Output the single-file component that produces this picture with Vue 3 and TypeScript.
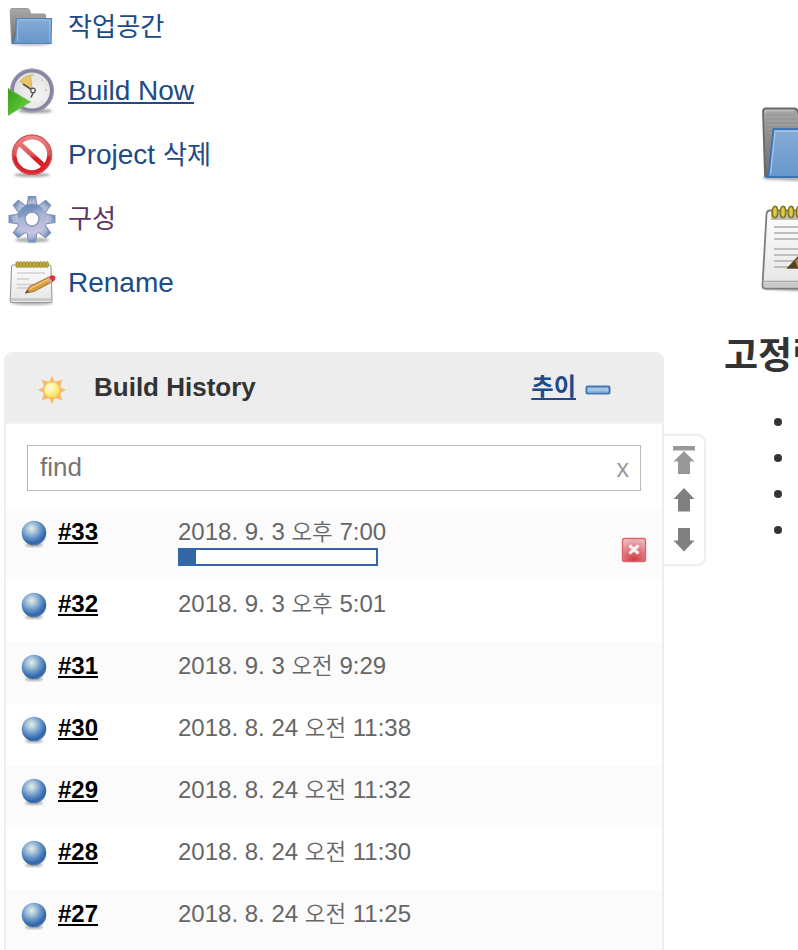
<script setup lang="ts">
import { defineComponent, h } from 'vue'

interface Task {
  label: string
  icon: 'folder' | 'clock' | 'delete' | 'gear' | 'notepad'
  state?: 'hovered' | 'visited'
}

interface Build {
  id: number
  date: string
  progress?: number
}

const tasks: Task[] = [
  { label: '작업공간', icon: 'folder' },
  { label: 'Build Now', icon: 'clock', state: 'hovered' },
  { label: 'Project 삭제', icon: 'delete' },
  { label: '구성', icon: 'gear', state: 'visited' },
  { label: 'Rename', icon: 'notepad' },
]

const builds: Build[] = [
  { id: 33, date: '2018. 9. 3 오후 7:00', progress: 8.2 },
  { id: 32, date: '2018. 9. 3 오후 5:01' },
  { id: 31, date: '2018. 9. 3 오전 9:29' },
  { id: 30, date: '2018. 8. 24 오전 11:38' },
  { id: 29, date: '2018. 8. 24 오전 11:32' },
  { id: 28, date: '2018. 8. 24 오전 11:30' },
  { id: 27, date: '2018. 8. 24 오전 11:25' },
]

// Sets Hangul runs slightly smaller than the Latin text around them.
const MixedText = defineComponent({
  props: { text: { type: String, required: true } },
  setup(props) {
    return () =>
      h(
        'span',
        props.text
          .split(/([\uac00-\ud7a3]+)/)
          .filter((part) => part.length > 0)
          .map((part) => (/[\uac00-\ud7a3]/.test(part) ? h('span', { class: 'hangul' }, part) : part)),
      )
  },
})

const teeth = [0, 45, 90, 135, 180, 225, 270, 315]
const rings = [0, 1, 2, 3, 4, 5, 6, 7, 8, 9]
</script>

<template>
  <div class="page">
    <svg class="defs" aria-hidden="true">
      <defs>
        <linearGradient id="g-back" x1="0" y1="0" x2="0" y2="1">
          <stop offset="0" stop-color="#a9a9a9" /><stop offset="1" stop-color="#6c6c6c" />
        </linearGradient>
        <linearGradient id="g-front" x1="0" y1="0" x2="0" y2="1">
          <stop offset="0" stop-color="#85abd6" /><stop offset="1" stop-color="#6797cc" />
        </linearGradient>
        <linearGradient id="g-paper" x1="0" y1="0" x2="0" y2="1">
          <stop offset="0" stop-color="#fdfdfd" /><stop offset="1" stop-color="#e6e6e6" />
        </linearGradient>
        <linearGradient id="g-red" x1="0" y1="0" x2="0" y2="1">
          <stop offset="0" stop-color="#ee8c8c" /><stop offset=".5" stop-color="#df5555" />
          <stop offset=".58" stop-color="#d51f28" /><stop offset="1" stop-color="#dc2830" />
        </linearGradient>
        <linearGradient id="g-gear" x1="0" y1="0" x2="0.2" y2="1">
          <stop offset="0" stop-color="#6083b4" /><stop offset=".5" stop-color="#a4b5d4" />
          <stop offset="1" stop-color="#c9c4e2" />
        </linearGradient>
        <linearGradient id="g-play" x1="0" y1="0" x2="1" y2="1">
          <stop offset="0" stop-color="#369b18" /><stop offset=".55" stop-color="#55bd30" />
          <stop offset="1" stop-color="#80cf62" />
        </linearGradient>
        <radialGradient id="g-face" cx=".6" cy=".6" r=".6">
          <stop offset="0" stop-color="#f5f5f3" /><stop offset="1" stop-color="#dededd" />
        </radialGradient>
        <radialGradient id="g-ball" cx=".4" cy=".32" r=".68">
          <stop offset="0" stop-color="#e9eedc" /><stop offset=".28" stop-color="#a9c5dc" />
          <stop offset=".6" stop-color="#5f8fc4" /><stop offset=".88" stop-color="#2f64a8" />
          <stop offset="1" stop-color="#4a79b4" />
        </radialGradient>
        <radialGradient id="g-sun" cx=".38" cy=".35" r=".7">
          <stop offset="0" stop-color="#fffceb" /><stop offset=".5" stop-color="#fdf08f" />
          <stop offset="1" stop-color="#fbd94a" />
        </radialGradient>
        <radialGradient id="g-stop" cx=".5" cy=".95" r="1">
          <stop offset="0" stop-color="#d43640" /><stop offset=".5" stop-color="#df7780" />
          <stop offset="1" stop-color="#efc4c6" />
        </radialGradient>
        <filter id="soft" x="-20%" y="-100%" width="140%" height="300%"><feGaussianBlur stdDeviation="1.2" /></filter>

        <symbol id="i-folder" viewBox="0 0 48 48">
          <ellipse cx="23" cy="40" rx="20" ry="2" fill="#777" opacity=".4" filter="url(#soft)" />
          <path d="M3.500 38.500 2.300 7Q2.300 4.600 4 4.600H19.500Q21 4.600 21.600 6.500L22.500 10H36.500Q37.500 10 37.500 12V38.500Z" fill="url(#g-back)" stroke="#929292" stroke-width="1" />
          <path d="M8.300 14.500H43.500L43 39.500H4.500Q7.500 37 7.800 26Z" fill="url(#g-front)" stroke="#4f82bd" stroke-width="1.200" />
          <path d="M9.500 37 9.800 16H42L41.600 38" fill="none" stroke="#9dbde1" stroke-width="1" />
        </symbol>

        <symbol id="i-notepad" viewBox="0 0 48 48">
          <ellipse cx="24" cy="43" rx="21" ry="2" fill="#666" opacity=".5" filter="url(#soft)" />
          <path d="M5 5H41.500Q43 5 43 7L44 40Q44 42.500 42 42.500H4Q2 42.500 2.200 40L3.600 6.500Q3.700 5 5 5Z" fill="url(#g-paper)" stroke="#999a96" stroke-width="1.100" />
          <path d="M3 39.500H43.300" stroke="#c4c4c2" stroke-width="2.400" />
          <rect x="7.500" y="1.800" width="33" height="5.800" fill="#b7a34a" opacity=".75" />
          <ellipse v-for="n in rings" :key="n" :cx="9.400 + n * 3.300" cy="4.500" rx="1.250" ry="3" fill="#cdb63a" stroke="#8c7a20" stroke-width=".7" />
          <path d="M9 13H37M9 19H21M9 24.500H30M9 28H22" stroke="#cfcfcf" stroke-width="1.600" />
          <path d="M17.500 33 21.500 26.500 41 17 45 21.500 26 31.500Z" fill="#d89c41" stroke="#936628" stroke-width=".8" />
          <path d="M21.500 29 42 18.500" stroke="#efc375" stroke-width="1.700" />
          <path d="M17 33.500 19 30 21.500 32.300Z" fill="#60513a" />
          <path d="M39.800 17.600 42.800 15.700Q45.500 14.500 47.500 17L47 20 44.500 22Z" fill="#d9363f" />
          <path d="M38.800 18.500 41 17.300 44.500 21.800 42.300 23Z" fill="#c8b0a0" />
        </symbol>

        <symbol id="i-notepad-large" viewBox="0 0 96 96">
          <ellipse cx="48" cy="87" rx="44" ry="3" fill="#555" opacity=".5" filter="url(#soft)" />
          <path d="M12 9.500H90V84Q90 87.500 86 87.500H7Q4.500 87.500 4.500 84L8.500 13.500Q8.700 9.500 12 9.500Z" fill="url(#g-paper)" stroke="#7c7c7c" stroke-width="1.800" />
          <path d="M10.500 14H90" stroke="#fff" stroke-width="2" />
          <path d="M6 80.500H90" stroke="#a8a8a8" stroke-width="1.600" />
          <path d="M6 84H90" stroke="#c9c9c9" stroke-width="4.500" />
          <rect x="13" y="10" width="77" height="9" fill="#bcbcb8" />
          <ellipse v-for="n in rings" :key="n" :cx="17 + n * 8" cy="11" rx="2.700" ry="5.600" fill="#decb48" stroke="#86751c" stroke-width="1.700" />
          <path d="M16 26H80M16 32H80M16 38H80M16 48H80M16 54H80M16 60H80M16 66H50" stroke="#bebebe" stroke-width="2.200" />
          <path d="M30 67 40 56 78 34 88 43 44 67Z" fill="#b18a4d" stroke="#60471e" stroke-width="1.500" />
          <path d="M30 67 37 60 40 67Z" fill="#514224" />
        </symbol>

        <symbol id="i-clock" viewBox="0 0 48 48">
          <ellipse cx="27" cy="43" rx="17" ry="2.300" fill="#555" opacity=".5" filter="url(#soft)" />
          <circle cx="24" cy="22.500" r="20" fill="url(#g-face)" stroke="#85849f" stroke-width="4" />
          <circle cx="24" cy="22.500" r="21.400" fill="none" stroke="#aaa9bf" stroke-width=".8" />
          <path d="M24 21 12 13.500Q16.500 7.500 22.500 7.200Z" fill="#e8c666" stroke="#c8a546" stroke-width=".7" />
          <path d="M15 16 24 22M27 21 23 29.500" fill="none" stroke="#555" stroke-width="1.600" />
          <circle cx="25" cy="22.500" r="2.300" fill="#eee" stroke="#555" stroke-width="1.200" />
          <g fill="#999"><circle cx="24" cy="7" r=".8" /><circle cx="38" cy="22" r=".8" /><circle cx="34" cy="12" r=".6" /><circle cx="34" cy="34" r=".6" /></g>
          <path d="M0 20 23 34 0 47.800Z" fill="url(#g-play)" />
          <path d="M.5 21 21.500 34 .5 47" fill="none" stroke="#75bf5b" stroke-width="1" />
        </symbol>

        <symbol id="i-delete" viewBox="0 0 48 48">
          <ellipse cx="24" cy="43" rx="18" ry="2" fill="#555" opacity=".5" filter="url(#soft)" />
          <circle cx="24" cy="22.750" r="17" fill="#fff" />
          <path d="M24 2.500A20.250 20.250 0 1 0 24 43A20.250 20.250 0 1 0 24 2.500ZM14.500 11A15 15 0 0 1 36.500 31ZM11.300 14.500A15 15 0 0 0 33 34.800Z" fill-rule="evenodd" fill="url(#g-red)" />
          <circle cx="24" cy="22.750" r="19.600" fill="none" stroke="#d6555c" stroke-width="1.100" />
        </symbol>

        <symbol id="i-gear" viewBox="0 0 48 48">
          <ellipse cx="24" cy="44" rx="17" ry="2.500" fill="#555" opacity=".45" filter="url(#soft)" />
          <mask id="gear-hole"><rect width="48" height="48" fill="#fff" /><circle cx="24" cy="23" r="6.500" fill="#000" /></mask>
          <g mask="url(#gear-hole)">
            <g fill="#8194b7">
              <path v-for="a in teeth" :key="a" d="M18.500 10 20 -.5H28L29.500 10Z" :transform="`rotate(${a} 24 23)`" />
            </g>
            <circle cx="24" cy="23" r="15.500" fill="#8194b7" />
            <g fill="url(#g-gear)">
              <path v-for="a in teeth" :key="a" d="M19.700 10 21 .5H27L28.300 10Z" :transform="`rotate(${a} 24 23)`" />
              <circle cx="24" cy="23" r="14.700" />
            </g>
            <path d="M10 22Q17 22 25 15T37 15Q34 8 24 7Q13 8 9 20Z" fill="#6488b9" opacity=".35" />
          </g>
          <circle cx="24" cy="23" r="7" fill="none" stroke="#8797b6" stroke-width="1.300" />
        </symbol>

        <symbol id="i-ball" viewBox="0 0 28 28">
          <ellipse cx="14" cy="25" rx="9" ry="2" fill="#555" opacity=".45" filter="url(#soft)" />
          <circle cx="14" cy="13" r="12.300" fill="url(#g-ball)" />
        </symbol>
      </defs>
    </svg>

    <aside class="side">
      <nav class="tasks">
        <a v-for="task in tasks" :key="task.label" class="task" :class="task.state">
          <svg class="task-icon"><use :href="`#i-${task.icon}`" /></svg>
          <MixedText class="task-label" :text="task.label" />
        </a>
      </nav>

      <div class="history-wrap">
        <section class="history">
          <header class="history-head">
            <svg class="sun" viewBox="0 0 30 30">
              <path d="M15 .8 17.500 6.500 19.500 6.500 25.200 4.800 23.500 10.500 23.500 12.500 29.200 15 23.500 17.500 23.500 19.500 25.200 25.200 19.500 23.500 17.500 23.500 15 29.200 12.500 23.500 10.500 23.500 4.800 25.200 6.500 19.500 6.500 17.500 .8 15 6.500 12.500 6.500 10.500 4.800 4.800 10.500 6.500 12.500 6.500Z" fill="#f9b96a" />
              <circle cx="15" cy="15" r="8.300" fill="url(#g-sun)" stroke="#f8b755" stroke-width="1" />
            </svg>
            <h2>Build History</h2>
            <a class="trend"><MixedText text="추이" /></a>
            <svg class="collapse" viewBox="0 0 26 10">
              <rect x="1.500" y="1.500" width="23" height="7" rx="1" fill="#a9c5e5" stroke="#4576b3" stroke-width="2" />
              <path d="M4 6.500H22" stroke="#8bafd9" stroke-width="1.500" />
            </svg>
          </header>

          <div class="search">
            <span>find</span>
            <span class="clear">x</span>
          </div>

          <div class="builds">
            <div v-for="build in builds" :key="build.id" class="build" :class="{ running: build.progress }">
              <svg class="ball"><use href="#i-ball" /></svg>
              <a class="number">#{{ build.id }}</a>
              <div class="details">
                <MixedText class="date" :text="build.date" />
                <div v-if="build.progress" class="progress">
                  <div class="bar" :style="{ width: build.progress + '%' }"></div>
                </div>
              </div>
              <svg v-if="build.progress" class="stop" viewBox="0 0 26 26">
                <rect x="1.500" y="1.500" width="23" height="23" rx="2" fill="url(#g-stop)" stroke="#d9656d" stroke-width="1.400" />
                <path d="M8.500 8.500 17.500 16.500M17.500 8.500 8.500 16.500" stroke="#f8eded" stroke-width="3.200" />
              </svg>
            </div>
          </div>
        </section>

        <div class="pager">
          <svg class="arrow faded" viewBox="0 0 24 30">
            <path d="M1 1H23V5.500H1ZM12 6 22.500 16.500H18V29H6V16.500H1.500Z" />
          </svg>
          <svg class="arrow" viewBox="0 0 24 30">
            <path d="M12 3 22.500 14H18V26.500H6V14H1.500Z" />
          </svg>
          <svg class="arrow" viewBox="0 0 24 30">
            <path d="M6 3H18V15.500H22.500L12 26.500 1.500 15.500H6Z" />
          </svg>
        </div>
      </div>
    </aside>

    <main class="main">
      <div class="links">
        <svg class="big-icon" viewBox="0 0 96 96">
          <ellipse cx="48" cy="77" rx="44" ry="3" fill="#666" opacity=".5" filter="url(#soft)" />
          <path d="M7 75 5 11Q5 7.500 8 7.500H36Q39 7.500 40 11L42 18H78V75Z" fill="url(#g-back)" stroke="#686868" stroke-width="1.800" />
          <path d="M7.500 12V9.500H36" fill="none" stroke="#c1c1c1" stroke-width="1.500" />
          <path d="M8 14H38M8 18H40M8 22H76M8 26H76M8 30H76M8 34H76M8 38H76M8 42H76M8 46H76M8 50H76M8 54H76M8 58H76M8 62H76" stroke="#777" stroke-width="1" opacity=".35" />
          <path d="M15.500 28H90L87 76H7.500Q10.500 75 11.500 68Z" fill="url(#g-front)" stroke="#3c73b5" stroke-width="2" />
          <path d="M12.500 73 17 30.300H88" fill="none" stroke="#a5c2e3" stroke-width="1.400" />
        </svg>
        <svg class="big-icon"><use href="#i-notepad-large" /></svg>
      </div>
      <h2 class="permalinks-title">고정링크</h2>
      <ul class="permalinks">
        <li v-for="n in 4" :key="n"></li>
      </ul>
    </main>
  </div>
</template>

<style>
body {
  background: #fff;
}

.hangul {
  font-size: 0.935em;
  line-height: 0;
}
</style>

<style scoped>
.page {
  display: flex;
  position: relative;
  width: 798px;
  height: 950px;
  overflow: hidden;
  color: #333;
  font-family: "Liberation Sans", "Noto Sans CJK KR", sans-serif;
}

.defs {
  position: absolute;
  width: 0;
  height: 0;
}

.side {
  flex: none;
  width: 702px;
  padding: 4px 0 0 4px;
}

.tasks {
  display: flex;
  flex-direction: column;
  gap: 16px;
  padding-left: 4px;
}

.task {
  display: flex;
  gap: 12px;
  height: 48px;
  color: #204a87;
  font-size: 28px;
  line-height: 46px;
}

.task.hovered {
  text-decoration: underline 2px;
  text-underline-offset: 2px;
}

.task.visited {
  color: #5c3566;
}

.task-icon {
  width: 48px;
  height: 48px;
}

.task-icon,
.sun,
.collapse,
.ball,
.stop,
.arrow,
.big-icon {
  filter: blur(0.45px);
}

.history-wrap {
  display: flex;
  align-items: flex-start;
  margin-top: 44px;
}

.history {
  box-sizing: border-box;
  flex: none;
  width: 660px;
  height: 640px;
  border: 2px solid #eee;
  border-radius: 8px;
}

.history-head {
  display: flex;
  align-items: center;
  box-sizing: border-box;
  height: 70px;
  padding: 0 51px 0 30px;
  border-bottom: 2px solid #f2f2f2;
  border-radius: 6px 6px 0 0;
  background: #ededed;
}

.sun {
  width: 30px;
  height: 30px;
  margin: 4px 0 0 1px;
}

.history-head h2 {
  margin: 0 auto 2px 27px;
  font-size: 26px;
  line-height: 30px;
}

.trend {
  margin-bottom: 4px;
  color: #204a87;
  font-size: 26px;
  font-weight: bold;
  line-height: 30px;
  text-decoration: underline 2px;
  text-decoration-skip-ink: none;
  text-underline-offset: 3px;
}

.collapse {
  width: 26px;
  height: 10px;
  margin: 4px 0 0 9px;
}

.search {
  display: flex;
  justify-content: space-between;
  box-sizing: border-box;
  height: 46px;
  margin: 21px 21px 17px;
  padding: 0 11px 0 12px;
  border: 1px solid #bbb;
  background: #fff;
  color: #757575;
  font-size: 26px;
  line-height: 43px;
}

.clear {
  color: #999;
  font-size: 25px;
  line-height: 44px;
}

.build {
  display: flex;
  align-items: flex-start;
  box-sizing: border-box;
  height: 62px;
  padding: 10px 15px 0 14px;
}

.build.running {
  height: 72px;
}

.build:nth-child(odd) {
  background: #fbfbfb;
}

.ball {
  width: 28px;
  height: 28px;
  margin-top: 2px;
}

.number {
  width: 120px;
  margin-left: 10px;
  color: #000;
  font-size: 24px;
  font-weight: bold;
  line-height: 28px;
  text-decoration: underline 2px;
  text-underline-offset: 2px;
}

.details {
  flex: 1;
  color: #666;
  font-size: 24px;
  line-height: 28px;
}

.date {
  display: block;
  font-weight: 350;
}

.progress {
  box-sizing: border-box;
  width: 200px;
  height: 18px;
  margin-top: 2px;
  border: 2px solid #3465a4;
  background: #fff;
}

.bar {
  height: 100%;
  background: #3465a4;
}

.stop {
  width: 26px;
  height: 26px;
  margin: 19px 0 0;
}

.pager {
  display: flex;
  flex: none;
  flex-direction: column;
  align-items: center;
  gap: 10px;
  box-sizing: border-box;
  width: 42px;
  height: 132px;
  margin-top: 82px;
  padding-top: 9px;
  border: 2px solid #eee;
  border-left: 0;
  border-radius: 0 8px 8px 0;
}

.arrow {
  width: 24px;
  height: 30px;
  fill: #808080;
}

.arrow.faded {
  fill: #999;
}

.main {
  flex: none;
  width: 400px;
  margin-left: 18px;
}

.links {
  display: flex;
  flex-direction: column;
  gap: 4px;
  padding: 101px 0 4px 34px;
}

.big-icon {
  width: 96px;
  height: 96px;
}

.permalinks-title {
  margin: 26px 0 0;
  font-family: "Noto Sans CJK KR", sans-serif;
  font-size: 37px;
  line-height: 52px;
}

.permalinks {
  margin: 25px 0 0;
  padding: 0 0 0 50px;
  list-style: none;
}

.permalinks li {
  display: flex;
  align-items: center;
  height: 36px;
}

.permalinks li::before {
  width: 8px;
  height: 8px;
  border-radius: 50%;
  background: #333;
  content: "";
}
</style>
